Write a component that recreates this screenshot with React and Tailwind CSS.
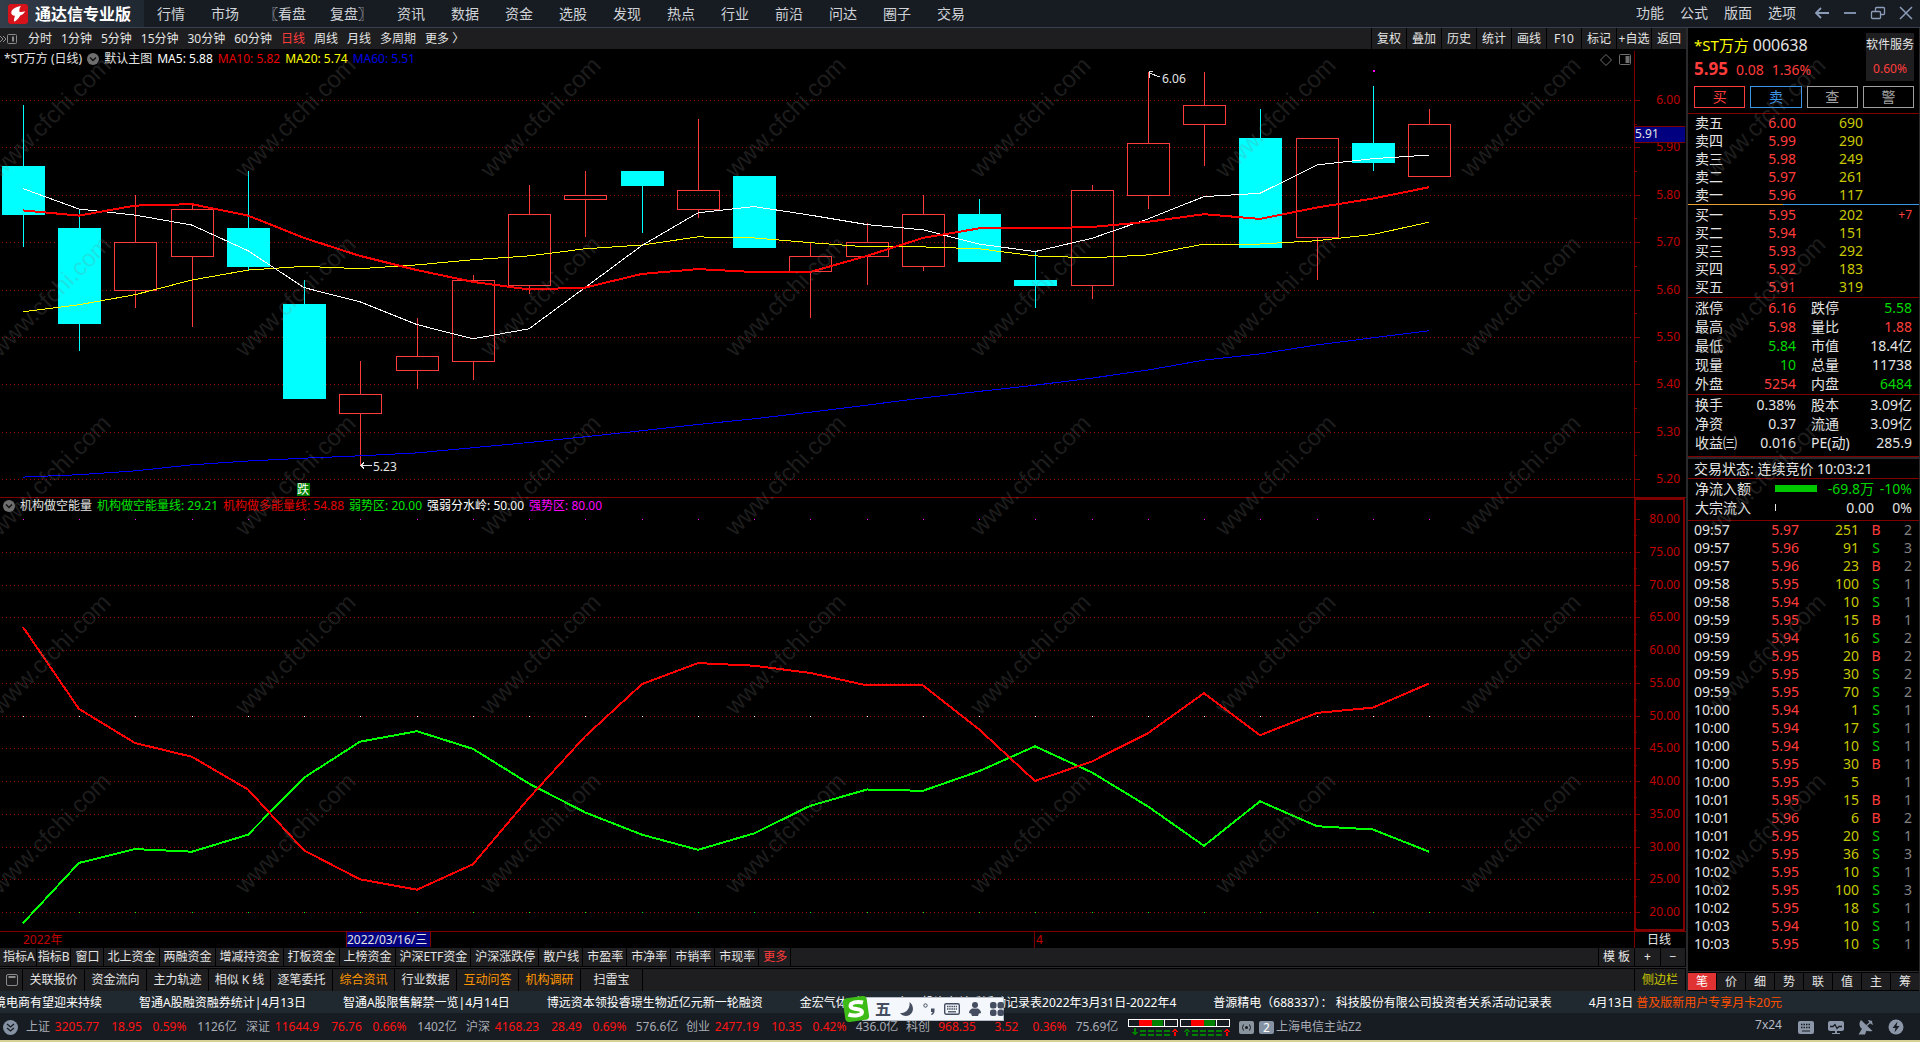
import { useLayoutEffect, useRef, useState } from "react";

const topMenus = ["资讯", "数据", "资金", "选股", "发现", "热点", "行业", "前沿", "问达", "圈子", "交易"];
const rightMenus = ["功能", "公式", "版面", "选项"];
const periods = ["分时", "1分钟", "5分钟", "15分钟", "30分钟", "60分钟", "日线", "周线", "月线", "多周期", "更多 〉"];
const chartTools = ["复权", "叠加", "历史", "统计", "画线", "F10", "标记", "+自选", "返回"];
const indicatorTabs = [
  "指标A", "指标B", "窗口", "北上资金", "两融资金", "增减持资金", "打板资金", "上榜资金",
  "沪深ETF资金", "沪深涨跌停", "散户线", "市盈率", "市净率", "市销率", "市现率", "更多",
];
const infoTabs = ["关联报价", "资金流向", "主力轨迹", "相似K线", "逐笔委托", "综合资讯", "行业数据", "互动问答", "机构调研", "扫雷宝"];
const hotTabs = ["综合资讯", "互动问答", "机构调研"];
const panelTabs = ["笔", "价", "细", "势", "联", "值", "主", "筹"];

// open, close, high, low
const candles = [
  [5.86, 5.76, 5.99, 5.69],
  [5.73, 5.53, 5.77, 5.47],
  [5.6, 5.7, 5.8, 5.56],
  [5.67, 5.77, 5.78, 5.52],
  [5.73, 5.65, 5.85, 5.64],
  [5.57, 5.37, 5.62, 5.37],
  [5.34, 5.38, 5.45, 5.23],
  [5.43, 5.46, 5.54, 5.39],
  [5.45, 5.62, 5.63, 5.41],
  [5.61, 5.76, 5.82, 5.59],
  [5.79, 5.8, 5.85, 5.71],
  [5.85, 5.82, 5.85, 5.72],
  [5.77, 5.81, 5.96, 5.75],
  [5.84, 5.69, 5.84, 5.69],
  [5.64, 5.67, 5.7, 5.54],
  [5.67, 5.7, 5.74, 5.61],
  [5.65, 5.76, 5.8, 5.64],
  [5.76, 5.66, 5.79, 5.66],
  [5.62, 5.61, 5.68, 5.56],
  [5.61, 5.81, 5.82, 5.58],
  [5.8, 5.91, 6.06, 5.77],
  [5.95, 5.99, 6.06, 5.86],
  [5.92, 5.69, 5.98, 5.69],
  [5.71, 5.92, 5.92, 5.62],
  [5.91, 5.87, 6.03, 5.85],
  [5.84, 5.95, 5.98, 5.84],
];
const ma5 = [5.813, 5.77, 5.757, 5.736, 5.682, 5.604, 5.574, 5.526, 5.496, 5.517, 5.604, 5.693, 5.762, 5.775, 5.757, 5.737, 5.726, 5.696, 5.68, 5.708, 5.749, 5.796, 5.803, 5.863, 5.876, 5.884];
const ma10 = [5.767, 5.756, 5.777, 5.78, 5.756, 5.709, 5.671, 5.641, 5.616, 5.6, 5.604, 5.633, 5.643, 5.637, 5.637, 5.671, 5.709, 5.729, 5.729, 5.732, 5.743, 5.759, 5.749, 5.773, 5.792, 5.816];
const ma20 = [5.553, 5.568, 5.589, 5.62, 5.641, 5.649, 5.644, 5.652, 5.663, 5.671, 5.686, 5.694, 5.711, 5.709, 5.699, 5.69, 5.69, 5.686, 5.671, 5.667, 5.673, 5.696, 5.696, 5.703, 5.716, 5.742];
const ma60 = [5.204, 5.209, 5.217, 5.23, 5.238, 5.244, 5.249, 5.255, 5.266, 5.277, 5.289, 5.302, 5.315, 5.327, 5.341, 5.356, 5.371, 5.385, 5.398, 5.413, 5.43, 5.451, 5.464, 5.483, 5.498, 5.513];
const longPower = [63.5, 51, 45.8, 43.7, 38.7, 29.4, 25, 23.4, 27.3, 37.4, 46.8, 54.8, 58, 57.6, 56.5, 54.6, 54.6, 47.9, 40, 43, 47.3, 53.4, 47, 50.4, 51.2, 54.88];
const shortPower = [18.3, 27.5, 29.6, 29.2, 31.8, 40.5, 46, 47.6, 44.9, 39.6, 35.2, 31.8, 29.5, 32, 36.2, 38.7, 38.5, 41.5, 45.3, 41.3, 36.1, 30.1, 36.9, 33.1, 32.6, 29.21];

const sells = [["卖五", "6.00", 690], ["卖四", "5.99", 290], ["卖三", "5.98", 249], ["卖二", "5.97", 261], ["卖一", "5.96", 117]];
const buys = [["买一", "5.95", 202, "+7"], ["买二", "5.94", 151], ["买三", "5.93", 292], ["买四", "5.92", 183], ["买五", "5.91", 319]];

const R = "text-[#ff3c3c]";
const G = "text-[#00d800]";
const W = "text-[#e4e4e4]";
const quotes = [
  ["涨停", "6.16", R, "跌停", "5.58", G],
  ["最高", "5.98", R, "量比", "1.88", R],
  ["最低", "5.84", G, "市值", "18.4亿", W],
  ["现量", "10", G, "总量", "11738", W],
  ["外盘", "5254", R, "内盘", "6484", G],
];
const finance = [
  ["换手", "0.38%", W, "股本", "3.09亿", W],
  ["净资", "0.37", W, "流通", "3.09亿", W],
  ["收益㈢", "0.016", W, "PE(动)", "285.9", W],
];
const ticks = [
  ["09:57", "5.97", 251, "B", 2], ["09:57", "5.96", 91, "S", 3], ["09:57", "5.96", 23, "B", 2],
  ["09:58", "5.95", 100, "S", 1], ["09:58", "5.94", 10, "S", 1], ["09:59", "5.95", 15, "B", 1],
  ["09:59", "5.94", 16, "S", 2], ["09:59", "5.95", 20, "B", 2], ["09:59", "5.95", 30, "S", 2],
  ["09:59", "5.95", 70, "S", 2], ["10:00", "5.94", 1, "S", 1], ["10:00", "5.94", 17, "S", 1],
  ["10:00", "5.94", 10, "S", 1], ["10:00", "5.95", 30, "B", 1], ["10:00", "5.95", 5, "", 1],
  ["10:01", "5.95", 15, "B", 1], ["10:01", "5.96", 6, "B", 2], ["10:01", "5.95", 20, "S", 1],
  ["10:02", "5.95", 36, "S", 3], ["10:02", "5.95", 10, "S", 1], ["10:02", "5.95", 100, "S", 3],
  ["10:02", "5.95", 18, "S", 1], ["10:03", "5.94", 10, "S", 1], ["10:03", "5.95", 10, "S", 1],
];
const indices = [
  ["上证", "3205.77", "18.95", "0.59%", "1126亿"],
  ["深证", "11644.9", "76.76", "0.66%", "1402亿"],
  ["沪深", "4168.23", "28.49", "0.69%", "576.6亿"],
  ["创业", "2477.19", "10.35", "0.42%", "436.0亿"],
  ["科创", "968.35", "3.52", "0.36%", "75.69亿"],
];

const AXIS = 52;

function useSize(w, h) {
  const ref = useRef(null);
  const [size, setSize] = useState({ w, h });
  useLayoutEffect(() => {
    const read = () => {
      const box = ref.current.getBoundingClientRect();
      setSize({ w: Math.round(box.width), h: Math.round(box.height) });
    };
    read();
    const observer = new ResizeObserver(read);
    observer.observe(ref.current);
    return () => observer.disconnect();
  }, []);
  return [ref, size];
}

// centre of candle i in a plot of the given width
const candleX = (i, plotW) => Math.round(23 + (i * (plotW - 228)) / 25);

function Line({ data, x, y, color, width = 1 }) {
  return (
    <polyline
      points={data.map((v, i) => `${x(i)},${y(v).toFixed(1)}`).join(" ")}
      fill="none"
      stroke={color}
      strokeWidth={width}
    />
  );
}

function ScaleMark({ plotW, y, yHalf, label, grid }) {
  return (
    <g>
      {grid && <line x1="2" x2={plotW - 2} y1={y + 0.5} y2={y + 0.5} stroke="#900000" strokeDasharray="1 3" />}
      <line x1={plotW} x2={plotW + 6} y1={y + 0.5} y2={y + 0.5} stroke="#800000" />
      <line x1={plotW} x2={plotW + 3} y1={yHalf + 0.5} y2={yHalf + 0.5} stroke="#800000" />
      <text x={plotW + 46} y={y + 4} textAnchor="end" fill="#c00000">{label}</text>
    </g>
  );
}

function CollapseDot() {
  return (
    <svg className="h-3 w-3 shrink-0" viewBox="0 0 12 12">
      <circle cx="6" cy="6" r="6" fill="#6e6e6e" />
      <path d="M3 4.5 6 7.5 9 4.5" fill="none" stroke="#111" strokeWidth="1.5" />
    </svg>
  );
}

function PriceChart() {
  const [ref, { w, h }] = useSize(1686, 446);
  const plotW = w - AXIS;
  const x = (i) => candleX(i, plotW);
  const y = (p) => 49 + ((6 - p) / 0.8) * (h - 67);
  const levels = [6, 5.9, 5.8, 5.7, 5.6, 5.5, 5.4, 5.3, 5.2];
  const high = Math.round(y(6.06));
  const low = Math.round(y(5.23)) + 0.5;

  return (
    <div className="relative min-h-0 flex-[446]">
      <svg ref={ref} className="block h-full w-full text-xs" shapeRendering="crispEdges">
        {levels.map((p) => (
          <ScaleMark key={p} plotW={plotW} y={Math.round(y(p))} yHalf={Math.round(y(p - 0.05))} label={p.toFixed(2)} grid />
        ))}
        <line x1={plotW + 0.5} x2={plotW + 0.5} y1="0" y2={h} stroke="#800000" />
        {candles.map(([open, close, top, bottom], i) => {
          const up = close > open;
          const bodyTop = Math.round(y(Math.max(open, close)));
          const bodyBottom = Math.round(y(Math.min(open, close)));
          const color = up ? "#ff3c3c" : "#00ffff";
          return (
            <g key={i} stroke={color}>
              <line x1={x(i) + 0.5} x2={x(i) + 0.5} y1={y(top)} y2={bodyTop} />
              <line x1={x(i) + 0.5} x2={x(i) + 0.5} y1={bodyBottom} y2={y(bottom)} />
              <rect x={x(i) - 20.5} y={bodyTop + 0.5} width="42" height={bodyBottom - bodyTop} fill={up ? "none" : color} />
            </g>
          );
        })}
        <Line data={ma60} x={x} y={y} color="#0000ff" />
        <Line data={ma20} x={x} y={y} color="#ffff00" />
        <Line data={ma5} x={x} y={y} color="#ffffff" />
        <Line data={ma10} x={x} y={y} color="#ff0000" width={2} />

        <g stroke="#e4e4e4" fill="none">
          <path d={`M${x(20) + 1} ${high + 1}l11 4M${x(20) + 5} ${high - 0.5}h-4v6`} />
          <path d={`M${x(6) + 1} ${low}h11M${x(6) + 4} ${low - 3}l-3 3 3 3`} />
        </g>
        <text x={x(20) + 14} y={high + 11} fill="#e4e4e4">6.06</text>
        <text x={x(6) + 13} y={low + 5} fill="#e4e4e4">5.23</text>
        <rect x={x(24)} y={high - 2} width="2" height="2" fill="#ff00ff" />
        <rect x={x(5) - 7} y={h - 14} width="13" height="13" fill="#008000" />
        <text x={x(5) - 7} y={h - 3} fill="#ffffff">跌</text>

        {/* 光标价位 */}
        <rect x={plotW + 1} y="75" width="50" height="17" fill="#800000" />
        <rect x={plotW + 1} y="76" width="50" height="15" fill="#000080" />
        <text x={plotW + 1} y="87" fill="#e4e4e4">5.91</text>
        <g fill="none" stroke="#6e6e6e" shapeRendering="auto">
          <path d={`M${plotW - 28} 3.5l5.5 5.5-5.5 5.5-5.5-5.5z`} />
          <rect x={plotW - 14.5} y="3.5" width="11" height="10" rx="1" />
          <rect x={plotW - 8} y="5.5" width="3" height="6" fill="#6e6e6e" />
        </g>
      </svg>
      <div className="absolute left-1 top-0 flex h-4 items-center gap-[5px] text-xs leading-4 whitespace-nowrap">
        <span>*ST万方 (日线)</span>
        <CollapseDot />
        <span>默认主图</span>
        <span className="text-white">MA5: 5.88</span>
        <span className="text-[#e60000]">MA10: 5.82</span>
        <span className="text-[#ffff00]">MA20: 5.74</span>
        <span className="text-[#0000e6]">MA60: 5.51</span>
      </div>
    </div>
  );
}

function PowerChart() {
  const [ref, { w, h }] = useSize(1686, 433);
  const plotW = w - AXIS;
  const x = (i) => candleX(i, plotW);
  const y = (v) => 21 + ((80 - v) / 60) * (h - 40);
  const levels = [80, 75, 70, 65, 60, 55, 50, 45, 40, 35, 30, 25, 20];

  return (
    <div className="relative min-h-0 flex-[433] border-y border-[#800000]">
      <svg ref={ref} className="block h-full w-full text-xs" shapeRendering="crispEdges">
        {levels.map((v) => (
          <ScaleMark key={v} plotW={plotW} y={Math.round(y(v))} yHalf={Math.round(y(v - 2.5))} label={v.toFixed(2)} grid={v !== 80} />
        ))}
        <rect x={plotW + 1} y="1" width={AXIS - 3} height={h - 2} fill="none" stroke="#800000" strokeWidth="2" />
        {candles.map((c, i) => (
          <g key={i}>
            <rect x={x(i)} y={Math.round(y(80))} width="1" height="1" fill="#ff00ff" />
            <rect x={x(i)} y={Math.round(y(50))} width="1" height="1" fill="#ffffff" />
            <rect x={x(i)} y={Math.round(y(20))} width="1" height="1" fill="#00ff00" />
          </g>
        ))}
        <Line data={shortPower} x={x} y={y} color="#00ff00" width={2} />
        <Line data={longPower} x={x} y={y} color="#ff0000" width={2} />
      </svg>
      <div className="absolute left-[3px] top-0 flex h-4 items-center gap-[5px] text-xs leading-4 whitespace-nowrap">
        <CollapseDot />
        <span>机构做空能量</span>
        <span className="text-[#00e600]">机构做空能量线: 29.21</span>
        <span className="text-[#e60000]">机构做多能量线: 54.88</span>
        <span className="text-[#00e600]">弱势区: 20.00</span>
        <span className="text-white">强弱分水岭: 50.00</span>
        <span className="text-[#ff00ff]">强势区: 80.00</span>
      </div>
    </div>
  );
}

function DateAxis() {
  const [ref, { w }] = useSize(1686, 16);
  const plotW = w - AXIS;
  const x = (i) => candleX(i, plotW);
  return (
    <svg ref={ref} className="block h-4 w-full shrink-0 text-xs" shapeRendering="crispEdges">
      <text x={x(0)} y="12" fill="#c00000">2022年</text>
      <rect x={x(6) - 14} y="0" width="85" height="15" fill="#800000" />
      <rect x={x(6) - 13} y="0" width="83" height="15" fill="#000080" />
      <text x={x(6) - 13} y="12" fill="#e4e4e4">2022/03/16/三</text>
      <line x1={x(18) - 0.5} x2={x(18) - 0.5} y1="0" y2="16" stroke="#800000" />
      <text x={x(18) + 1} y="12" fill="#c00000">4</text>
      <line x1={plotW + 0.5} x2={plotW + 0.5} y1="0" y2="16" stroke="#800000" />
      <text x={plotW + 13} y="12" fill="#e4e4e4">日线</text>
    </svg>
  );
}

function TopBar() {
  return (
    <header className="flex h-7 shrink-0 items-stretch border-b border-[#36414d] bg-[#171b22] text-sm text-[#cfd3d8]">
      <div className="flex w-36 shrink-0 items-center gap-[7px] bg-linear-to-r from-[#333c49] to-[#1f2731] pl-2 text-base font-bold text-white">
        <svg className="h-5 w-5 shrink-0" viewBox="0 0 20 20">
          <rect width="20" height="20" rx="3" fill="#d6131b" />
          <path d="M13 2C9 2.600 4 4.600 3.300 8c-.4 2.200 1.200 3.600 3.700 3.800-.6 2-1.200 4-1 6 2.400-1 5-3.600 6.200-6.400 2.600-.6 4.200-2 4.800-4.400-1.600.9-3.600 1.200-5.600.8C11.200 5.600 11.600 3.800 13 2z" fill="#fff" />
        </svg>
        <span className="leading-5 whitespace-nowrap">通达信专业版</span>
      </div>
      <nav className="flex">
        <button className="w-[54px]">行情</button>
        <button className="w-[54px]">市场</button>
        <button className="w-[66px]">〖看盘</button>
        <button className="w-[66px]">复盘〗</button>
        {topMenus.map((m) => (
          <button key={m} className="w-[54px]">{m}</button>
        ))}
      </nav>
      <div className="ml-auto flex pb-px">
        {rightMenus.map((m) => (
          <button key={m} className="w-11">{m}</button>
        ))}
      </div>
      <div className="flex items-center gap-3 pl-[10px] pr-[6px] pb-px text-[#8b9cb8]">
        <button aria-label="后退">
          <svg className="h-4 w-4" viewBox="0 0 16 16" fill="none" stroke="currentColor" strokeWidth="1.8">
            <path d="M15 8H2M7 3 2 8 7 13" />
          </svg>
        </button>
        <button aria-label="最小化">
          <svg className="h-4 w-4" viewBox="0 0 16 16" stroke="currentColor" strokeWidth="1.8">
            <path d="M2 8h12" />
          </svg>
        </button>
        <button aria-label="还原">
          <svg className="h-4 w-4" viewBox="0 0 16 16" fill="none" stroke="currentColor" strokeWidth="1.3">
            <rect x="1.5" y="6.5" width="9" height="7" rx="1" />
            <path d="M5.500 6.500v-3a1 1 0 0 1 1-1h7a1 1 0 0 1 1 1v5a1 1 0 0 1-1 1h-3" />
          </svg>
        </button>
        <button aria-label="关闭">
          <svg className="h-4 w-4" viewBox="0 0 16 16" stroke="currentColor" strokeWidth="1.5">
            <path d="M2 2l12 12M14 2 2 14" />
          </svg>
        </button>
      </div>
    </header>
  );
}

function PeriodBar() {
  return (
    <div className="mb-[2px] flex h-[21px] shrink-0 bg-[#1e1e20] text-xs whitespace-nowrap">
      <button aria-label="收起" className="flex w-6 items-center">
        <svg className="h-3 w-[18px]" viewBox="0 0 18 12" fill="none" stroke="#8a8a8a">
          <path d="M0 3l3 3-3 3M3 3l3 3-3 3" />
          <rect x="7.5" y="1.5" width="9" height="9" rx="1" />
          <path d="M13 3.500v5" strokeWidth="2" />
        </svg>
      </button>
      <div className="flex gap-[9px] pl-1 pt-px">
        {periods.map((p) => (
          <button key={p} className={p === "日线" ? "text-[#ff3c3c]" : ""}>{p}</button>
        ))}
      </div>
      <div className="ml-auto flex">
        {chartTools.map((t) => (
          <button key={t} className="w-[35px] border-l border-black pt-px text-center">{t}</button>
        ))}
      </div>
    </div>
  );
}

function TabRows() {
  return (
    <>
      <div className="flex h-[18px] shrink-0 bg-[#1e1e20] pl-[2px] text-xs whitespace-nowrap">
        {indicatorTabs.map((t) => (
          <button
            key={t}
            className={`border-r border-black leading-[18px] ${t.startsWith("指标") ? "px-px" : "pl-1 pr-[3px]"} ${t === "更多" ? "text-[#ff3c3c]" : ""}`}
          >
            {t}
          </button>
        ))}
        <button className="ml-auto w-9 border-l border-black">模 板</button>
        <button className="w-[26px] border-l border-black">+</button>
        <button className="w-[26px] border-x border-black">−</button>
      </div>
      <div className="mt-px h-px shrink-0 bg-[#2a2a2c]" />
      <div className="mt-px flex h-[22px] shrink-0 bg-[#1e1e20] pl-px text-xs whitespace-nowrap">
        <button aria-label="面板" className="flex w-[22px] items-center justify-center border-r border-black">
          <svg className="h-3 w-3" viewBox="0 0 12 12" fill="none" stroke="#8a8a8a">
            <rect x=".5" y=".5" width="11" height="11" rx="1.5" />
            <path d="M2.500 3h7" strokeWidth="2" />
          </svg>
        </button>
        {infoTabs.map((t) => (
          <button key={t} className={`w-[62px] border-r border-black ${hotTabs.includes(t) ? "text-[#ff9600]" : ""}`}>
            {t === "相似K线" ? "相似 K 线" : t}
          </button>
        ))}
        <button className="ml-auto w-[52px] border-x border-black text-[#c8c800]">侧边栏</button>
      </div>
    </>
  );
}

function BookTable({ rows }) {
  return (
    <table className="w-full table-fixed">
      <tbody>
        {rows.map(([name, price, vol, diff]) => (
          <tr key={name} className="h-[18px] leading-[18px]">
            <td className="w-[50px]">{name}</td>
            <td className="w-[51px] text-right text-[#ff3c3c]">{price}</td>
            <td className="w-[67px] text-right text-[#c8c800]">{vol}</td>
            <td className="text-right text-xs text-[#ff3c3c]">{diff}</td>
          </tr>
        ))}
      </tbody>
    </table>
  );
}

function QuoteTable({ rows }) {
  return (
    <table className="w-full table-fixed whitespace-nowrap">
      <tbody>
        {rows.map(([a, av, ac, b, bv, bc]) => (
          <tr key={a} className="h-[19px] leading-[19px]">
            <td className="w-[50px]">{a}</td>
            <td className={`w-[51px] text-right ${ac}`}>{av}</td>
            <td className="w-[65px] pl-[15px]">{b}</td>
            <td className={`text-right ${bc}`}>{bv}</td>
          </tr>
        ))}
      </tbody>
    </table>
  );
}

function SidePanel() {
  return (
    <aside className="flex w-[234px] shrink-0 flex-col border-l-2 border-r border-[#2a2a2c] bg-black text-sm">
      <div className="flex h-[86px] shrink-0 flex-col justify-end border-b border-[#800000] pb-[5px] pl-[6px] pr-[5px]">
        <div className="flex justify-between">
          <div className="whitespace-nowrap">
            <h1 className="text-[15px] leading-6">
              <span className="text-[#ffff00]">*ST万方</span> <span className="text-base leading-6">000638</span>
            </h1>
            <p className="flex items-baseline gap-2 leading-6 text-[#ff3c3c]">
              <b className="text-[17px] leading-6">5.95</b>
              <span>0.08</span>
              <span>1.36%</span>
            </p>
          </div>
          <div className="mb-[5px] h-12 w-12 bg-[#1e1e20] text-center text-xs leading-6 whitespace-nowrap">
            <p>软件服务</p>
            <p className="text-[#ff3c3c]">0.60%</p>
          </div>
        </div>
        <div className="grid grid-cols-4 gap-[5px] leading-5">
          <button className="border border-[#ff3c3c] text-[#ff3c3c]">买</button>
          <button className="border border-[#3c96e6] text-[#3c96e6]">卖</button>
          <button className="border border-[#a0a0a0] text-[#a0a0a0]">查</button>
          <button className="border border-[#a0a0a0] text-[#a0a0a0]">警</button>
        </div>
      </div>
      <div className="px-[7px]">
        <BookTable rows={sells} />
      </div>
      <div className="mb-px flex h-px shrink-0">
        <div className="w-[95px] bg-[#e6a030]" />
        <div className="flex-1 bg-[#3c96e6]" />
      </div>
      <div className="border-b border-[#800000] px-[7px] pb-px">
        <BookTable rows={buys} />
      </div>
      <div className="border-b border-[#800000] px-[7px] pb-px">
        <QuoteTable rows={quotes} />
      </div>
      <div className="border-b border-[#800000] px-[7px] pb-1">
        <QuoteTable rows={finance} />
      </div>
      <p className="border-b border-t-2 border-b-[#800000] border-t-[#2a2a2c] px-[6px] leading-[19px]">
        交易状态: 连续竞价 10:03:21
      </p>
      <div className="border-b border-[#800000] px-[7px] pb-[3px]">
        <table className="w-full table-fixed whitespace-nowrap">
          <tbody>
            <tr className="h-[19px] leading-[19px]">
              <td className="w-20">净流入额</td>
              <td className="w-[42px]"><div className="h-[7px] w-full bg-[#00c800]" /></td>
              <td className="w-[57px] text-right text-[#00d800]">-69.8万</td>
              <td className="text-right text-[#00d800]">-10%</td>
            </tr>
            <tr className="h-[19px] leading-[19px]">
              <td>大宗流入</td>
              <td><div className="h-[7px] w-px bg-[#e4e4e4]" /></td>
              <td className="text-right">0.00</td>
              <td className="text-right">0%</td>
            </tr>
          </tbody>
        </table>
      </div>
      <div className="min-h-0 flex-1 overflow-hidden pl-[6px] pr-[7px]">
        <table className="w-full table-fixed">
          <tbody>
            {ticks.map(([time, price, vol, side, count], i) => (
              <tr key={i} className="h-[18px] leading-[18px]">
                <td className="w-[51px]">{time}</td>
                <td className="w-[54px] text-right text-[#ff3c3c]">{price}</td>
                <td className="w-[60px] text-right text-[#c8c800]">{vol}</td>
                <td className={`w-[34px] text-center ${side === "B" ? "text-[#ff3c3c]" : "text-[#00c800]"}`}>{side}</td>
                <td className="text-right text-[#828282]">{count}</td>
              </tr>
            ))}
          </tbody>
        </table>
      </div>
      <div className="flex h-5 shrink-0 gap-px border-t border-[#2a2a2c] pb-px pt-px">
        {panelTabs.map((t, i) => (
          <button key={t} className={`flex-1 text-xs ${i === 0 ? "bg-[#e03232] text-white" : "bg-[#1e1e20]"}`}>{t}</button>
        ))}
      </div>
    </aside>
  );
}

function NewsBar() {
  return (
    <div className="h-[22px] shrink-0 overflow-hidden bg-[#212930] text-xs leading-[24px] whitespace-nowrap text-white">
      <div className="-ml-[6px] flex gap-[37px]">
        <a href="#n1">境电商有望迎来持续</a>
        <a href="#n2">智通A股融资融券统计|4月13日</a>
        <a href="#n3">智通A股限售解禁一览|4月14日</a>
        <a href="#n4">博远资本领投睿璟生物近亿元新一轮融资</a>
        <a href="#n5">金宏气体（688106）： 投资者关系活动记录表2022年3月31日-2022年4</a>
        <a href="#n6">普源精电（688337）： 科技股份有限公司投资者关系活动记录表</a>
        <span>
          4月13日 <a href="#ad" className="text-[#ff5000]">普及版新用户专享月卡20元</a>
        </span>
      </div>
    </div>
  );
}

function FlowGauge({ down }) {
  return (
    <svg className="h-[17px] w-[50px]" viewBox="0 0 50 17" shapeRendering="crispEdges">
      <rect x=".5" y=".5" width="49" height="7" fill="none" stroke="#fff" />
      <rect x="11" y="1" width="13" height="6" fill="#ff0000" />
      <rect x="24" y="1" width="11" height="6" fill="#008000" />
      <path d="M36.5 1v6" stroke="#fff" />
      <path d={down ? "M4 13h6l-3 4zM6 9h2v5H6z" : "M4 13h6l-3-4zM6 12h2v5H6z"} fill="#008000" />
      <path d="M12 12h30M12 16h30" stroke="#008000" strokeWidth="2" strokeDasharray="6 2" />
      <path d="M44 13h6l-3-4zM46 12h2v5h-2z" fill="#ff0000" />
    </svg>
  );
}

function StatusBar() {
  return (
    <footer className="flex h-[27px] shrink-0 items-center bg-[#171b22] pt-px text-xs whitespace-nowrap text-[#a8adb5]">
      <button aria-label="展开" className="ml-[3px] mr-2">
        <svg className="block h-[15px] w-[15px]" viewBox="0 0 15 15">
          <circle cx="7.5" cy="7.5" r="7.5" fill="#8492a3" />
          <path d="M4 4l3.500 3L11 4M4 8l3.500 3L11 8" fill="none" stroke="#171b22" strokeWidth="1.3" />
        </svg>
      </button>
      {indices.map(([name, value, diff, pct, amount]) => (
        <div key={name} className="flex w-[220px] text-center text-[#ff1414]">
          <span className="w-6 text-[#a8adb5]">{name}</span>
          <span className="w-[54px]">{value}</span>
          <span className="w-[45px]">{diff}</span>
          <span className="w-[41px]">{pct}</span>
          <span className="w-[54px] text-[#a8adb5]">{amount}</span>
        </div>
      ))}
      <div className="ml-[2px] flex items-center gap-[2px]">
        <FlowGauge down />
        <FlowGauge />
      </div>
      <svg className="ml-[9px] h-[13px] w-[15px]" viewBox="0 0 15 13">
        <rect width="15" height="13" rx="2" fill="#8a949f" />
        <path d="M4.500 3.500q-2 3 0 6M10.500 3.500q2 3 0 6" fill="none" stroke="#171b22" />
        <circle cx="7.5" cy="6.5" r="1.5" fill="#171b22" />
      </svg>
      <span className="ml-[5px] h-[13px] w-[15px] rounded-xs bg-[#8492a3] text-center leading-[13px] text-white">2</span>
      <span className="ml-[2px]">上海电信主站Z2</span>
      <span className="ml-auto mr-4 pb-1 text-[#b4bac2]">7x24</span>
      <div className="flex items-center gap-[14px] pr-4 text-[#8b97a8]">
        <svg className="h-4 w-4" viewBox="0 0 16 16">
          <rect x="0" y="2" width="16" height="13" rx="2" fill="currentColor" />
          <path d="M3 5.500h10M3 8.500h10" stroke="#171b22" strokeWidth="1.5" strokeDasharray="1.5 1" />
          <path d="M4 12h8" stroke="#171b22" />
        </svg>
        <svg className="h-4 w-4" viewBox="0 0 16 16">
          <rect x="0" y="2" width="16" height="10" rx="2" fill="currentColor" />
          <path d="M7 12h2v2h3v1H4v-1h3z" fill="currentColor" />
          <path d="M2 7.500h3l2-2 2 4 2-2h3" fill="none" stroke="#171b22" strokeWidth="1.3" />
        </svg>
        <svg className="h-4 w-4" viewBox="0 0 16 16" fill="currentColor">
          <path d="M3 1C-.5 5 1.500 13.500 14.500 12z" />
          <path d="M4.500 9 .5 15.500h6.500l1.500-4z" />
          <path d="M8 7l6-5" stroke="currentColor" strokeWidth="1.3" />
          <path d="M10 1c3 0 4.500 2 5 5l-2-1-2-2z" />
        </svg>
        <svg className="h-4 w-4" viewBox="0 0 16 16">
          <circle cx="8" cy="8" r="7.5" fill="currentColor" />
          <path d="M9.500 2.500 4.500 9h3l-1 4.500L11.500 7h-3z" fill="#171b22" />
        </svg>
      </div>
    </footer>
  );
}

// 输入法悬浮条
function ImeBar() {
  return (
    <div className="absolute bottom-5 left-[842px] flex h-[27px] items-center">
      <svg className="relative z-10 h-7 w-7" viewBox="0 0 28 28">
        <rect x="2" y="2" width="24" height="24" rx="4" fill="#3dbb17" transform="rotate(-8 14 14)" />
        <path d="M21 7.500C15 6 8.500 7.500 8.500 11c0 4.500 11.500 1.500 11.500 6 0 3.500-7.500 4.500-13.500 2.500" fill="none" stroke="#fff" strokeWidth="4" />
      </svg>
      <div className="-ml-2 flex h-6 w-[142px] items-center gap-[9px] border border-[#b4bcc8] bg-[#f4f7fb] pl-3 text-[#454e60]">
        <span className="text-base leading-6 font-bold">五</span>
        <svg className="h-[14px] w-[14px] shrink-0" viewBox="0 0 14 14" fill="currentColor">
          <path d="M9.500 0C15 4 14 13.500 6 14c-2.500 0-4.500-1-6-3 5 .5 10.500-3.500 9.500-11z" />
        </svg>
        <svg className="h-[14px] w-[12px] shrink-0" viewBox="0 0 12 14">
          <circle cx="2.5" cy="3.5" r="1.7" fill="none" stroke="currentColor" />
          <path d="M8 6.500h3.500v2.500c0 2-1 3.500-3 4l-.5-1c1-.5 1.500-1 1.500-2H8z" fill="currentColor" />
        </svg>
        <svg className="h-[14px] w-4 shrink-0" viewBox="0 0 16 14">
          <rect x=".7" y="1.7" width="14.6" height="10.6" rx="1.5" fill="none" stroke="currentColor" strokeWidth="1.4" />
          <path d="M3 4.500h10M3 7h10" stroke="currentColor" strokeWidth="1.5" strokeDasharray="1.5 .7" />
          <path d="M4 9.800h8" stroke="currentColor" strokeWidth="1.3" />
        </svg>
        <svg className="h-[14px] w-[12px] shrink-0" viewBox="0 0 12 14" fill="currentColor">
          <circle cx="6" cy="3" r="3" />
          <path d="M3 6.500h6c2 1 3 3 3 4.500-1 .5-1.500.5-2 .2L9 14H3l-1-2.800C1.500 11.500 1 11.500 0 11c0-1.500 1-3.500 3-4.500z" />
        </svg>
        <svg className="h-[14px] w-[14px] shrink-0" viewBox="0 0 14 14" fill="currentColor">
          <rect x="0" y="0" width="6.5" height="6.5" rx="2.5" />
          <rect x="7.5" y="0" width="6.5" height="6.5" rx="2.5" />
          <rect x="0" y="7.5" width="6.5" height="6.5" rx="2.5" />
          <rect x="7.5" y="7.5" width="6.5" height="6.5" rx="2.5" />
        </svg>
      </div>
    </div>
  );
}

function Watermark() {
  return (
    <svg className="pointer-events-none absolute inset-0 z-10 h-full w-full" fill="#808080" fillOpacity="0.24">
      {[179, 358, 537, 716, 895].map((y) =>
        [0, 245, 490, 735, 980, 1225, 1470, 1715].map((x) => (
          <text key={`${x}-${y}`} transform={`translate(${x} ${y}) rotate(-45)`} fontSize="24" fontFamily="Liberation Sans, sans-serif">
            www.cfchi.com
          </text>
        ))
      )}
    </svg>
  );
}

export default function App() {
  return (
    <div className="relative flex h-screen flex-col overflow-hidden bg-black font-['Noto_Sans','Noto_Sans_CJK_SC',sans-serif] text-[#e4e4e4]">
      <TopBar />
      <main className="flex min-h-0 flex-1">
        <section className="flex min-w-0 flex-1 flex-col">
          <PeriodBar />
          <PriceChart />
          <PowerChart />
          <DateAxis />
          <TabRows />
        </section>
        <SidePanel />
      </main>
      <NewsBar />
      <StatusBar />
      <div className="h-[2px] shrink-0 bg-[#d6d296]" />
      <Watermark />
      <ImeBar />
    </div>
  );
}
